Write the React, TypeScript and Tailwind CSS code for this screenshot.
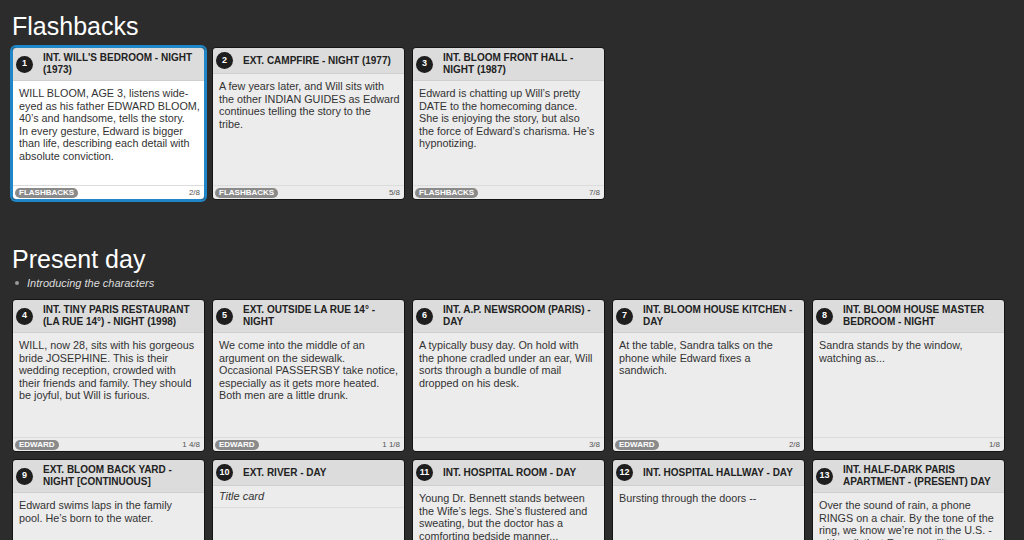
import React from "react";

interface Scene {
    num: number;
    title: string;
    synopsis?: string;
    body: string;
    tag?: string;
    length: string;
    selected?: boolean;
}

interface Section {
    name: string;
    notes?: string[];
    scenes: Scene[];
}

const sections: Section[] = [
    {
        name: "Flashbacks",
        scenes: [
            {
                num: 1,
                title: "INT. WILL'S BEDROOM - NIGHT (1973)",
                body: "WILL BLOOM, AGE 3, listens wide-\neyed as his father EDWARD BLOOM,\n40\u2019s and handsome, tells the story.\nIn every gesture, Edward is bigger\nthan life, describing each detail with\nabsolute conviction.",
                tag: "FLASHBACKS",
                length: "2/8",
                selected: true,
            },
            {
                num: 2,
                title: "EXT. CAMPFIRE - NIGHT (1977)",
                body: "A few years later, and Will sits with\nthe other INDIAN GUIDES as Edward\ncontinues telling the story to the\ntribe.",
                tag: "FLASHBACKS",
                length: "5/8",
            },
            {
                num: 3,
                title: "INT. BLOOM FRONT HALL - NIGHT (1987)",
                body: "Edward is chatting up Will\u2019s pretty\nDATE to the homecoming dance.\nShe is enjoying the story, but also\nthe force of Edward\u2019s charisma. He\u2019s\nhypnotizing.",
                tag: "FLASHBACKS",
                length: "7/8",
            },
        ],
    },
    {
        name: "Present day",
        notes: ["Introducing the characters"],
        scenes: [
            {
                num: 4,
                title: "INT. TINY PARIS RESTAURANT (LA RUE 14\u00b0) - NIGHT (1998)",
                body: "WILL, now 28, sits with his gorgeous\nbride JOSEPHINE. This is their\nwedding reception, crowded with\ntheir friends and family. They should\nbe joyful, but Will is furious.",
                tag: "EDWARD",
                length: "1 4/8",
            },
            {
                num: 5,
                title: "EXT. OUTSIDE LA RUE 14\u00b0 - NIGHT",
                body: "We come into the middle of an\nargument on the sidewalk.\nOccasional PASSERSBY take notice,\nespecially as it gets more heated.\nBoth men are a little drunk.",
                tag: "EDWARD",
                length: "1 1/8",
            },
            {
                num: 6,
                title: "INT. A.P. NEWSROOM (PARIS) - DAY",
                body: "A typically busy day. On hold with\nthe phone cradled under an ear, Will\nsorts through a bundle of mail\ndropped on his desk.",
                length: "3/8",
            },
            {
                num: 7,
                title: "INT. BLOOM HOUSE KITCHEN - DAY",
                body: "At the table, Sandra talks on the\nphone while Edward fixes a\nsandwich.",
                tag: "EDWARD",
                length: "2/8",
            },
            {
                num: 8,
                title: "INT. BLOOM HOUSE MASTER BEDROOM - NIGHT",
                body: "Sandra stands by the window,\nwatching as...",
                length: "1/8",
            },
            {
                num: 9,
                title: "EXT. BLOOM BACK YARD - NIGHT [CONTINUOUS]",
                body: "Edward swims laps in the family\npool. He\u2019s born to the water.",
                length: "1/8",
            },
            {
                num: 10,
                title: "EXT. RIVER - DAY",
                synopsis: "Title card",
                body: "",
                length: "1/8",
            },
            {
                num: 11,
                title: "INT. HOSPITAL ROOM - DAY",
                body: "Young Dr. Bennett stands between\nthe Wife\u2019s legs. She\u2019s flustered and\nsweating, but the doctor has a\ncomforting bedside manner...",
                length: "3/8",
            },
            {
                num: 12,
                title: "INT. HOSPITAL HALLWAY - DAY",
                body: "Bursting through the doors --",
                length: "1/8",
            },
            {
                num: 13,
                title: "INT. HALF-DARK PARIS APARTMENT - (PRESENT) DAY",
                body: "Over the sound of rain, a phone\nRINGS on a chair. By the tone of the\nring, we know we\u2019re not in the U.S. -\nwith a distinct European lilt.",
                length: "4/8",
            },
        ],
    },
];

const SceneCard: React.FC<{ scene: Scene }> = ({ scene }) => {
    const bodyBg = scene.selected ? "bg-white" : "bg-[#ececec]";
    return (
        <div
            className={
                scene.selected
                    ? "flex h-[153px] w-[193px] flex-col overflow-hidden rounded-[4px] border border-[#1f86c7] shadow-[0_0_0_2px_#1f86c7]"
                    : "flex h-[153px] w-[193px] flex-col overflow-hidden rounded-[4px] border border-[#141414]"
            }
        >
            <div className="flex min-h-[25px] items-center border-b border-[#cfcfcf] bg-[#dcdcdc] py-[4px] pr-[4px]">
                <div className="ml-[3px] mr-[10px] flex h-[17px] w-[17px] shrink-0 items-center justify-center rounded-full bg-[#1e1e1e] text-[9px] font-bold text-white">
                    {scene.num}
                </div>
                <div className="text-[10px] font-bold leading-[12px] text-[#222]">
                    {scene.title}
                </div>
            </div>
            {scene.synopsis && (
                <div
                    className={`border-b border-[#dcdcdc] pl-[6px] pr-[3px] pt-[4px] pb-[4px] text-[11px] leading-[13px] italic text-[#333] ${bodyBg}`}
                >
                    {scene.synopsis}
                </div>
            )}
            <div
                className={`flex-1 overflow-hidden whitespace-pre-line pl-[6px] pr-[3px] pt-[6px] text-[10.8px] leading-[12.5px] text-[#333] ${bodyBg}`}
            >
                {scene.body}
            </div>
            <div
                className={`flex h-[14px] items-center justify-between border-t border-[#dcdcdc] pl-[2px] pr-[4px] ${bodyBg}`}
            >
                {scene.tag ? (
                    <span className="rounded-full bg-[#8a8a8a] px-[4px] text-[8px] font-bold leading-[10px] text-white">
                        {scene.tag}
                    </span>
                ) : (
                    <span />
                )}
                <span className="text-[8px] leading-[10px] text-[#555]">
                    {scene.length}
                </span>
            </div>
        </div>
    );
};

export default function App() {
    return (
        <div className="h-[540px] w-full overflow-hidden bg-[#2c2c2c] px-[12px] pt-[11px] font-['Liberation_Sans',Arial,sans-serif]">
            {sections.map((section, i) => (
                <div key={section.name} className={i > 0 ? "mt-[44px]" : ""}>
                    <h2 className="text-[25px] leading-[30px] text-white">
                        {section.name}
                    </h2>
                    {section.notes && (
                        <ul className="mt-[2px]">
                            {section.notes.map((n) => (
                                <li
                                    key={n}
                                    className="flex items-center text-[11px] leading-[14px] italic text-[#ddd]"
                                >
                                    <span className="ml-[3px] mr-[8px] h-[4px] w-[4px] rounded-full bg-[#999]" />
                                    {n}
                                </li>
                            ))}
                        </ul>
                    )}
                    <div
                        className={`grid grid-cols-[repeat(5,193px)] gap-[7px] ${
                            section.notes ? "mt-[9px]" : "mt-[6px]"
                        }`}
                    >
                        {section.scenes.map((s) => (
                            <SceneCard key={s.num} scene={s} />
                        ))}
                    </div>
                </div>
            ))}
        </div>
    );
}
